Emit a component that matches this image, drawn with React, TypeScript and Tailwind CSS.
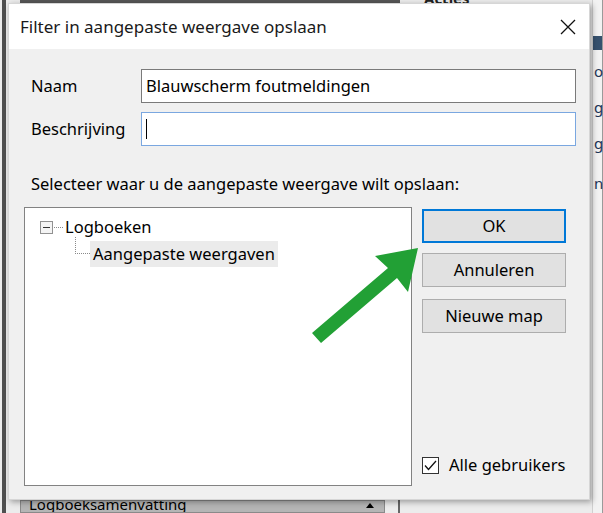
import React from "react";

const font = { fontFamily: '"Noto Sans", "Open Sans", sans-serif' };

function DottedH({ w }: { w: number }) {
  return (
    <svg width={w} height="1" className="block">
      <line x1="0" y1="0.5" x2={w} y2="0.5" stroke="#8a8a8a" strokeWidth="1" strokeDasharray="1 1" />
    </svg>
  );
}

export default function App() {
  return (
    <div
      className="relative w-[603px] h-[513px] overflow-hidden bg-[#ececec] text-black"
      style={font}
    >
      {/* background window: left frame line */}
      <div className="absolute left-[2px] top-0 w-[4px] h-[513px] bg-[#4f4f4f]" />
      {/* background window: top header strip */}
      <div className="absolute left-[20px] top-0 w-[380px] h-[4px] bg-[#555]" />
      <div className="absolute left-[424px] top-[-9px] text-[15px] font-bold leading-none text-[#222]">
        Acties
      </div>
      {/* background right pane */}
      <div className="absolute left-[592px] top-0 w-[11px] h-[513px] bg-[#f2f2f2] border-l border-[#d0d0d0]">
        <div className="absolute left-[9px] top-0 w-[2px] h-[513px] bg-[#9a9a9a]" />
        <div className="absolute left-0 top-[36px] w-[9px] h-[14px] bg-[#36516e]" />
        <div className="absolute left-[1px] top-[64px] text-[15px] leading-none text-[#1d3557]">oc</div>
        <div className="absolute left-[1px] top-[100px] text-[15px] leading-none text-[#1d3557]">ga</div>
        <div className="absolute left-[1px] top-[136px] text-[15px] leading-none text-[#1d3557]">ga</div>
        <div className="absolute left-[1px] top-[176px] text-[15px] leading-none text-[#1d3557]">nc</div>
      </div>
      {/* background bottom bar */}
      <div className="absolute left-[20px] top-[500px] w-[365px] h-[13px] bg-[#b5b5b5] border border-[#8a8a8a] overflow-hidden">
        <div className="absolute left-[8px] top-[-4px] text-[15px] leading-none">Logboeksamenvatting</div>
        <div className="absolute left-[345px] top-[2px] w-0 h-0 border-l-[4px] border-r-[4px] border-b-[5px] border-l-transparent border-r-transparent border-b-black" />
      </div>
      <div className="absolute left-[398px] top-[500px] w-[2px] h-[13px] bg-[#666]" />

      {/* Dialog window */}
      <div className="absolute left-[8px] top-[3px] w-[582px] h-[497px] bg-[#f0f0f0] flex flex-col shadow-[2px_2px_6px_rgba(0,0,0,0.35)] border border-[#d6d6d6]">
        {/* title bar */}
        <div className="h-[45px] bg-white flex items-center justify-between pl-[11px] pr-[13px] shrink-0">
          <span className="text-[17px] text-[#1a1a1a]">Filter in aangepaste weergave opslaan</span>
          <svg width="16" height="16" viewBox="0 0 16 16" className="block">
            <path d="M1 1 L15 15 M15 1 L1 15" stroke="#111" strokeWidth="1.3" fill="none" />
          </svg>
        </div>

        {/* body */}
        <div className="flex flex-col pl-[15px] pr-[13px] pt-[20px] text-[16.5px]">
          <div className="flex items-center h-[34px]">
            <span className="w-[117px] pl-[7px] shrink-0">Naam</span>
            <div className="flex-1 h-[34px] bg-white border border-[#7a7a7a] flex items-center pl-[4px]">
              Blauwscherm foutmeldingen
            </div>
          </div>
          <div className="flex items-center h-[34px] mt-[9px]">
            <span className="w-[117px] pl-[7px] shrink-0">Beschrijving</span>
            <div className="flex-1 h-[34px] bg-white border border-[#7aa7e0] flex items-center pl-[4px]">
              <div className="w-[1px] h-[20px] bg-black" />
            </div>
          </div>
          <div className="pl-[7px] mt-[27px] leading-[22px]">
            Selecteer waar u de aangepaste weergave wilt opslaan:
          </div>

          <div className="flex mt-[12px]">
            {/* tree */}
            <div className="w-[388px] h-[279px] bg-white border border-[#828282] shrink-0 pt-[11px] pl-[15px]">
              <div className="flex items-center h-[17px]">
                <div className="w-[13px] h-[13px] border border-[#919191] bg-[#f4f4f4] flex items-center justify-center">
                  <div className="w-[7px] h-[1px] bg-[#333]" />
                </div>
                <div className="w-[11px] ml-[1px]">
                  <DottedH w={9} />
                </div>
                <span className="text-[16.5px] leading-none">Logboeken</span>
              </div>
              <div className="flex items-start mt-[1px]">
                <div className="ml-[35px] w-[15px] flex flex-col">
                  <svg width="15" height="17" className="block">
                    <line x1="0.5" y1="0" x2="0.5" y2="16" stroke="#8a8a8a" strokeWidth="1" strokeDasharray="1 1" />
                    <line x1="0" y1="16.5" x2="15" y2="16.5" stroke="#8a8a8a" strokeWidth="1" strokeDasharray="1 1" />
                  </svg>
                </div>
                <div className="mt-[4px] h-[26px] px-[3px] bg-[#ebebeb] flex items-center text-[16.5px]">
                  Aangepaste weergaven
                </div>
              </div>
            </div>

            {/* buttons column */}
            <div className="ml-[10px] flex flex-col flex-1">
              <button className="mt-[2px] w-[144px] h-[34px] bg-[#e1e1e1] border-2 border-[#0078d7] text-[16.5px] flex items-center justify-center">
                OK
              </button>
              <button className="mt-[10px] w-[144px] h-[34px] bg-[#e1e1e1] border border-[#adadad] text-[16.5px] flex items-center justify-center">
                Annuleren
              </button>
              <button className="mt-[12px] w-[144px] h-[34px] bg-[#e1e1e1] border border-[#adadad] text-[16.5px] flex items-center justify-center">
                Nieuwe map
              </button>
              <div className="mt-auto mb-[8px] flex items-center">
                <div className="w-[17px] h-[17px] border border-[#333] bg-white flex items-center justify-center">
                  <svg width="13" height="11" viewBox="0 0 13 11" className="block">
                    <path d="M1 5.5 L4.5 9.5 L12 1" stroke="#111" strokeWidth="1.3" fill="none" />
                  </svg>
                </div>
                <span className="ml-[10px] text-[16.5px]">Alle gebruikers</span>
              </div>
            </div>
          </div>
        </div>
      </div>

      {/* green arrow annotation */}
      <svg width="603" height="513" className="absolute left-0 top-0 pointer-events-none">
        <polygon
          points="418,248 375,256 388,268 312,333 321,343 397,278 408,292"
          fill="#22a035"
        />
      </svg>
    </div>
  );
}
